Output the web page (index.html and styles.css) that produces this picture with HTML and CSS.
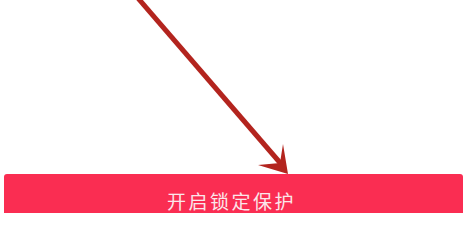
FILE: index.html
```html
<!DOCTYPE html>
<html lang="zh">
<head>
<meta charset="utf-8">
<link rel="stylesheet" href="styles.css">
</head>
<body>
<div class="page">
  <div class="canvas">
    <svg class="arrow" width="474" height="174" viewBox="0 0 474 174">
      <line x1="137" y1="-3" x2="282" y2="165" stroke="#b3241e" stroke-width="5" stroke-linecap="butt"/>
      <polygon points="288,174 283,144 280,163 258,165" fill="#b3241e"/>
    </svg>
  </div>
  <div class="button">
    <span class="label">开启锁定保护</span>
  </div>
</div>
</body>
</html>
```
FILE: styles.css
```css
html, body {
  margin: 0;
  padding: 0;
  background: #ffffff;
  overflow: hidden;
}
.page {
  width: 474px;
  height: 213px;
  overflow: hidden;
  display: flex;
  flex-direction: column;
}
.canvas {
  height: 174px;
  flex: none;
  position: relative;
}
.arrow {
  display: block;
  overflow: visible;
  position: relative;
  z-index: 1;
}
.button {
  flex: none;
  margin-left: 4px;
  width: 459px;
  height: 58px;
  box-sizing: border-box;
  padding-bottom: 6px;
  background: #fa2d52;
  border-radius: 3px;
  display: flex;
  justify-content: center;
  align-items: center;
}
.label {
  font-family: "Noto Sans CJK SC", "Noto Sans", sans-serif;
  font-size: 19px;
  font-weight: 400;
  letter-spacing: 2.5px;
  color: #fbe6ea;
  padding-right: 4px;
}
```
